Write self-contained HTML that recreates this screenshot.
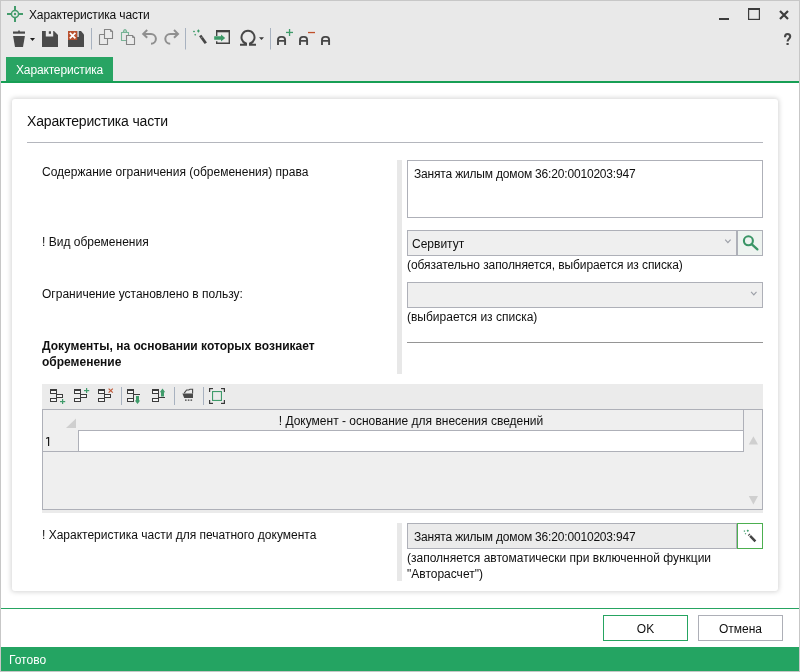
<!DOCTYPE html>
<html><head><meta charset="utf-8">
<style>
*{box-sizing:border-box;margin:0;padding:0}
html,body{width:800px;height:672px;overflow:hidden;background:#fff}
body{position:relative;will-change:transform;font-family:"Liberation Sans",sans-serif;font-size:12px;color:#0f0f0f}
.a{position:absolute}
.t{position:absolute;white-space:nowrap;line-height:15px;font-size:12px}
#frame{left:0;top:0;width:800px;height:672px;border:1px solid #c7c7c7}
#topbg{left:1px;top:1px;width:798px;height:80px;background:#e9e9e9}
#gline{left:1px;top:81px;width:798px;height:2px;background:#179f55}
#tab{left:6px;top:57px;width:107px;height:24px;background:#28a463}
#card{left:12px;top:99px;width:766px;height:492px;background:#fff;border-radius:3px;box-shadow:0 0 5px 1px rgba(0,0,0,0.17)}
#gline2{left:1px;top:608px;width:798px;height:1px;background:#26a461}
#status{left:1px;top:647px;width:798px;height:24px;background:#24a462}
.btn{position:absolute;top:615px;width:85px;height:26px;background:#fff;border:1px solid #adafb7;text-align:center;line-height:26px;font-size:12px}
.sep{position:absolute;width:1px;background:#a9b3c1}
.vbar{position:absolute;left:397px;width:5px;background:#e8e8e8}
.inp{position:absolute;border:1px solid #aeb0b8;background:#fff}
.combo{background:#efefef}
.hline{position:absolute;height:1px}
</style></head>
<body>
<div id="frame" class="a"></div>
<div id="topbg" class="a"></div>
<div id="gline" class="a"></div>
<div id="tab" class="a"></div>
<div class="t" style="left:16px;top:63px;color:#fff;font-size:12px;letter-spacing:-0.15px">Характеристика</div>
<div class="t" style="left:29px;top:8px;font-size:12px;letter-spacing:-0.15px">Характеристика части</div>


<svg class="a" style="left:0;top:0" width="800" height="672" viewBox="0 0 800 672">
<!-- titlebar crosshair -->
<g fill="#449c6c">
<rect x="14" y="6" width="2" height="4.2"/><rect x="14" y="17.8" width="2" height="4.2"/>
<rect x="7" y="13" width="4.2" height="2"/><rect x="18.8" y="13" width="4.2" height="2"/>
<circle cx="15" cy="14" r="1.2"/>
</g>
<circle cx="15" cy="14" r="3.55" fill="none" stroke="#449c6c" stroke-width="1.5"/>
<!-- window buttons -->
<rect x="719" y="18" width="10" height="2" fill="#3c3c3c"/>
<rect x="748.6" y="8.6" width="10.8" height="10.8" fill="none" stroke="#3c3c3c" stroke-width="1.2"/>
<rect x="748" y="8" width="12" height="2" fill="#3c3c3c"/>
<path d="M780,11 L788,19 M788,11 L780,19" stroke="#3c3c3c" stroke-width="2.2"/>
<path d="M785,37.2 C785,35 786,34 787.6,34 C789.3,34 790.2,35.1 790.2,36.6 C790.2,38.6 787.6,39 787.6,41.6" fill="none" stroke="#474747" stroke-width="2.1"/>
<rect x="786.5" y="43" width="2.2" height="2" fill="#474747"/>
<!-- trash -->
<g fill="#4a4a4a">
<rect x="13" y="31.5" width="12" height="2.2"/><rect x="18" y="30.6" width="2" height="1.2"/>
<polygon points="13.1,36 24.9,36 23,47 15,47"/>
<polygon points="30,38 35,38 32.5,41" fill="#1e1e1e"/>
</g>
<!-- save -->
<path d="M42,31 H54 L58,35 V47 H42 Z" fill="#4b4b4b"/>
<rect x="45.8" y="31" width="7.4" height="5.5" fill="#eaeaea"/>
<rect x="48.8" y="31.3" width="2.2" height="2.5" fill="#4b4b4b"/>
<!-- save close -->
<path d="M68,31 H81 L84,34.4 V47 H68 Z" fill="#4b4b4b"/>
<rect x="77.2" y="31" width="1.6" height="6" fill="#d8dde0"/>
<rect x="68" y="31" width="9.2" height="9" fill="#b9512f"/>
<path d="M69.8,32.8 L75.4,38.3 M75.4,32.8 L69.8,38.3" stroke="#fff" stroke-width="1.7"/>
<!-- separators -->
<g fill="#a8b2c0">
<rect x="91" y="28" width="1" height="21.5"/><rect x="185" y="28" width="1" height="21.5"/><rect x="270" y="28" width="1" height="21.5"/>
</g>
<!-- copy -->
<path d="M99.5,34.5 H104.5 M99.5,34.5 V44.5 H107.5 V38.5" fill="none" stroke="#848484" stroke-width="1.1"/>
<path d="M104.5,29.5 H110.5 L112.5,31.5 V38.5 H104.5 Z" fill="#ebebeb" stroke="#848484" stroke-width="1.1"/>
<path d="M110.5,29.5 V31.5 H112.5" fill="#a0a0a0" stroke="#848484" stroke-width="0.8"/>
<!-- paste -->
<path d="M126.5,40.5 H121.5 V32.5 H128.5 V35.5" fill="none" stroke="#79b497" stroke-width="1.1"/>
<path d="M122.6,33 C122.9,30.4 123.8,29 125,29 C126.2,29 127.1,30.4 127.4,33 Z" fill="#79b497"/>
<rect x="124.3" y="30.6" width="1.4" height="1.2" fill="#d9e9df"/>
<path d="M126.5,35.5 H132.5 L134.5,37.5 V44.5 H126.5 Z" fill="#ebebeb" stroke="#848484" stroke-width="1.1"/>
<path d="M132.5,35.5 V37.5 H134.5" fill="#a0a0a0" stroke="#848484" stroke-width="0.8"/>
<!-- undo / redo -->
<g fill="none" stroke="#8f8f8f" stroke-width="2" stroke-linecap="butt">
<path d="M147.2,30 L143.2,33.9 L147.2,37.8 M143.2,33.9 H151 A4.9,4.9 0 0 1 151,43.7 H151.5"/>
<path d="M174,30 L178,33.9 L174,37.8 M178,33.9 H170.2 A4.9,4.9 0 0 0 170.2,43.7 H169.7"/>
</g>
<!-- wand -->
<g fill="#3d9a68">
<path d="M198.4,29.2 L199.8,31 L198.4,32.8 L197,31 Z"/>
<path d="M194,30.6 L195.1,31.6 L194,32.6 L192.9,31.6 Z"/>
<path d="M195.2,33.7 L196.2,34.7 L195.2,35.7 L194.2,34.7 Z"/>
</g>
<path d="M200.2,35.5 L205.8,43.2" stroke="#464646" stroke-width="2.8"/>
<path d="M200.6,38.3 L203,36.5" stroke="#9a9a9a" stroke-width="0.7"/>
<!-- insert -->
<path d="M216.7,36 V30.7 H229.3 V43.3 H216.7 V41.2" fill="none" stroke="#434343" stroke-width="1.4"/>
<rect x="216" y="30" width="14" height="2.3" fill="#434343"/>
<path d="M214.2,36.3 H221 V34.6 L225.2,38 L221,41.4 V39.7 H214.2 Z" fill="#3d9a68"/>
<!-- omega -->
<path d="M240,44.8 H246 V43.5 A6.5,6.5 0 1 1 250,43.5 V44.8 H256" fill="none" stroke="#474747" stroke-width="2"/>
<polygon points="259,37.2 264,37.2 261.5,40" fill="#3a3a3a"/>
<!-- A+ A- A -->
<g fill="none" stroke="#474747" stroke-width="1.9">
<path d="M278,45 V40 Q278,36.9 281,36.9 H282.1 Q285.1,36.9 285.1,40 V45 M278,40.9 H285.1"/>
<path d="M300,45 V40 Q300,36.9 303,36.9 H304.1 Q307.1,36.9 307.1,40 V45 M300,40.9 H307.1"/>
<path d="M322,45 V40 Q322,36.9 325,36.9 H326.1 Q329.1,36.9 329.1,40 V45 M322,40.9 H329.1"/>
</g>
<g fill="#3f9b6a"><rect x="288.9" y="29" width="1.3" height="7"/><rect x="286" y="31.8" width="7" height="1.3"/></g>
<rect x="308" y="31.9" width="7" height="1.3" fill="#c0502a"/>
</svg>

<div id="card" class="a"></div>
<div class="t" style="left:27px;top:113px;font-size:14px;line-height:17px;letter-spacing:-0.17px">Характеристика части</div>
<div class="hline" style="left:27px;top:142px;width:736px;background:#b4b6bd"></div>

<div class="t" style="left:42px;top:165px">Содержание ограничения (обременения) права</div>
<div class="t" style="left:42px;top:235px">! Вид обременения</div>
<div class="t" style="left:42px;top:287px">Ограничение установлено в пользу:</div>
<div class="t" style="left:42px;top:338px;font-weight:bold;line-height:16px">Документы, на основании которых возникает<br>обременение</div>

<div class="vbar" style="top:160px;height:214px"></div>
<div class="inp" style="left:407px;top:160px;width:356px;height:58px"></div>
<div class="t" style="left:414px;top:167px;letter-spacing:-0.18px">Занята жилым домом 36:20:0010203:947</div>

<div class="inp combo" style="left:407px;top:230px;width:330px;height:26px"></div>
<div class="t" style="left:412px;top:237px">Сервитут</div>
<div class="inp" style="left:737px;top:230px;width:26px;height:26px;background:#eef3f0"></div>
<div class="t" style="left:407px;top:258px;letter-spacing:-0.08px">(обязательно заполняется, выбирается из списка)</div>

<div class="inp combo" style="left:407px;top:282px;width:356px;height:26px"></div>
<div class="t" style="left:407px;top:310px">(выбирается из списка)</div>
<div class="hline" style="left:407px;top:342px;width:356px;background:#959595"></div>

<!-- grid -->
<div class="a" style="left:42px;top:384px;width:721px;height:129px;background:#ebebeb"></div>
<div class="a" style="left:42px;top:409px;width:721px;height:101px;border:1px solid #aeb0b8;background:#efefef"></div>
<div class="a" style="left:79px;top:431px;width:664px;height:20px;background:#fff"></div>
<div class="a" style="left:78px;top:430px;width:666px;height:1px;background:#aeb0b8"></div>
<div class="a" style="left:78px;top:430px;width:1px;height:22px;background:#aeb0b8"></div>
<div class="a" style="left:743px;top:410px;width:1px;height:42px;background:#aeb0b8"></div>
<div class="a" style="left:43px;top:451px;width:701px;height:1px;background:#aeb0b8"></div>
<div class="t" style="left:79px;width:664px;text-align:center;top:414px">! Документ - основание для внесения сведений</div>
<svg class="a" style="left:0;top:0" width="100" height="460"><path d="M46.2,438.6 L48.2,437.4 M48.6,437 V446" fill="none" stroke="#151515" stroke-width="1.15"/></svg>

<div class="t" style="left:42px;top:528px">! Характеристика части для печатного документа</div>
<div class="vbar" style="top:523px;height:58px"></div>
<div class="inp combo" style="left:407px;top:523px;width:330px;height:26px;background:#ebebeb"></div>
<div class="t" style="left:414px;top:530px;letter-spacing:-0.18px">Занята жилым домом 36:20:0010203:947</div>
<div class="inp" style="left:737px;top:523px;width:26px;height:26px;border-color:#4caf50"></div>
<div class="t" style="left:407px;top:550px;line-height:16px">(заполняется автоматически при включенной функции<br>"Авторасчет")</div>


<svg class="a" style="left:0;top:0" width="800" height="672" viewBox="0 0 800 672">
<!-- combo chevrons -->
<path d="M725.2,239.6 L727.9,242.6 L730.6,239.6" fill="none" stroke="#9da0a8" stroke-width="1.2"/>
<path d="M751.1,291.8 L753.8,294.8 L756.5,291.8" fill="none" stroke="#9da0a8" stroke-width="1.2"/>
<!-- search -->
<circle cx="748.4" cy="240.8" r="4.5" fill="none" stroke="#3a9566" stroke-width="2.1"/>
<path d="M751.6,244.2 L757.4,249.4" stroke="#3a9566" stroke-width="2.3" stroke-linecap="round"/>
<!-- bottom wand -->
<g fill="#3d9a68">
<path d="M747.8,529.6 L749,530.8 L747.8,532 L746.6,530.8 Z"/>
<path d="M744.4,530.2 L745.3,531.1 L744.4,532 L743.5,531.1 Z"/>
<path d="M745.5,532.9 L746.3,533.7 L745.5,534.5 L744.7,533.7 Z"/>
</g>
<path d="M748.7,534.3 L749.5,535.2 M750.1,535.9 L755.4,541.4" stroke="#464646" stroke-width="2.5"/>
<!-- grid toolbar separators -->
<g fill="#a8b2c0"><rect x="121" y="387" width="1" height="18"/><rect x="174" y="387" width="1" height="18"/><rect x="203" y="387" width="1" height="18"/></g>
<!-- tree icons -->
<defs>
<g id="bx"><rect x="0.5" y="0.5" width="6" height="3" fill="#f6f6f6" stroke="#3c3c3c" stroke-width="1"/></g>
<g id="bxt"><rect x="0.5" y="0.5" width="6" height="4" fill="#f6f6f6" stroke="#3c3c3c" stroke-width="1"/><rect x="0" y="0" width="7" height="2" fill="#3c3c3c"/></g>
</defs>
<use href="#bxt" x="50" y="389"/><use href="#bx" x="56" y="394"/><use href="#bx" x="50" y="398"/>
<g fill="#3f9b6a"><rect x="62" y="399" width="1.2" height="5"/><rect x="60" y="401" width="5.2" height="1.2"/></g>
<use href="#bxt" x="74" y="389"/><use href="#bx" x="80" y="394"/><use href="#bx" x="74" y="398"/>
<g fill="#3f9b6a"><rect x="86" y="388" width="1.2" height="5"/><rect x="84" y="390" width="5.2" height="1.2"/></g>
<use href="#bxt" x="98" y="389"/><use href="#bx" x="104" y="394"/><use href="#bx" x="98" y="398"/>
<path d="M108.6,388.6 L112.8,392.6 M112.8,388.6 L108.6,392.6" stroke="#c05a3a" stroke-width="1.2"/>
<!-- move down -->
<use href="#bxt" x="127" y="389"/><use href="#bx" x="127" y="398"/>
<rect x="133" y="393" width="1" height="5" fill="#3c3c3c"/><rect x="134" y="394" width="6" height="1" fill="#3c3c3c"/>
<path d="M136,396 H139 V400.4 H140.2 L137.5,404 L134.8,400.4 H136 Z" fill="#3f9b6a"/>
<!-- move up -->
<use href="#bxt" x="152" y="389"/><use href="#bx" x="152" y="398"/>
<rect x="158" y="393" width="1" height="5" fill="#3c3c3c"/><rect x="159" y="397" width="6" height="1" fill="#3c3c3c"/>
<path d="M161,396.6 H164 V392.2 H165.2 L162.5,388.4 L159.8,392.2 H161 Z" fill="#3f9b6a"/>
<!-- folder -->
<path d="M184.2,393.2 L186.6,390 H188.8 L190,389.2 H192.6 V393.4" fill="none" stroke="#4a4a4a" stroke-width="1.1"/>
<path d="M182.4,393.4 H193 V398 H184.2 Z" fill="#4a4a4a"/>
<g fill="#5a5a5a"><rect x="185" y="399.4" width="1.6" height="1.5"/><rect x="187.8" y="399.4" width="1.6" height="1.5"/><rect x="190.5" y="399.4" width="1.6" height="1.5"/></g>
<!-- fullscreen -->
<g fill="#3a3a3a"><rect x="209" y="388" width="4" height="1.2"/><rect x="209" y="388" width="1.2" height="4"/>
<rect x="221" y="388" width="4" height="1.2"/><rect x="223.8" y="388" width="1.2" height="4"/>
<rect x="209" y="402.8" width="4" height="1.2"/><rect x="209" y="400" width="1.2" height="4"/>
<rect x="221" y="402.8" width="4" height="1.2"/><rect x="223.8" y="400" width="1.2" height="4"/></g>
<rect x="212.55" y="391.55" width="8.9" height="8.9" fill="none" stroke="#3f9b6a" stroke-width="1.1"/>
<!-- scroll arrows -->
<polygon points="753.4,436.2 758,444.6 748.8,444.6" fill="#cfcfcf"/>
<polygon points="748.8,496 758,496 753.4,504.6" fill="#cfcfcf"/>
<!-- header triangle -->
<polygon points="76,418.5 76,428 66,428" fill="#cfcfcf"/>
</svg>

<div id="gline2" class="a"></div>
<div class="btn" style="left:603px;border-color:#26a461">OK</div>
<div class="btn" style="left:698px">Отмена</div>
<div id="status" class="a"></div>
<div class="t" style="left:9px;top:653px;color:#fff">Готово</div>
</body></html>
